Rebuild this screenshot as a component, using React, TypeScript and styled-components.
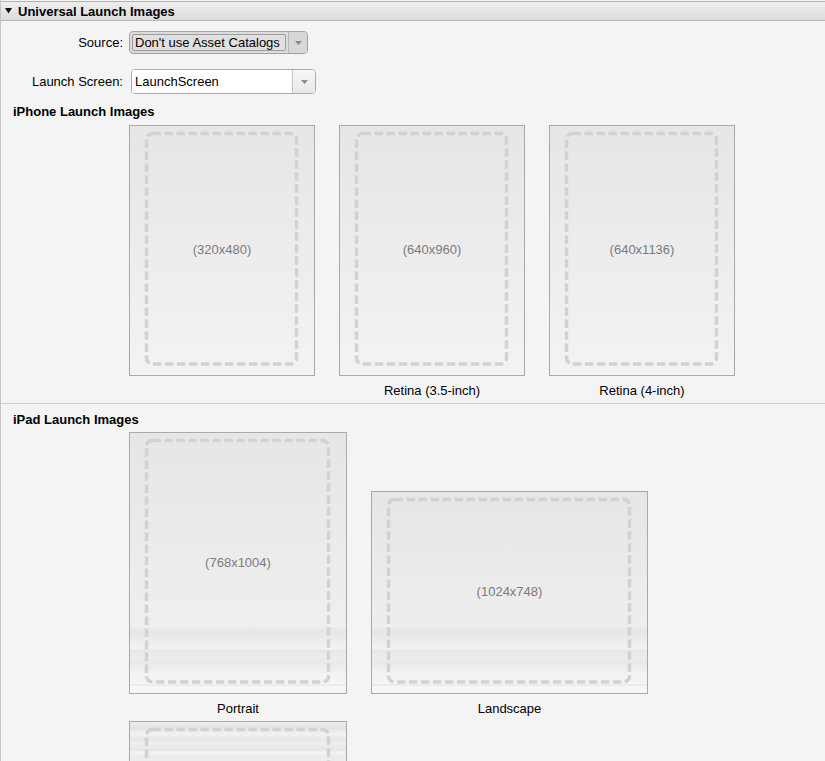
import React from 'react';
import styled, { createGlobalStyle } from 'styled-components';

const GlobalStyle = createGlobalStyle`
  html, body {
    margin: 0;
    padding: 0;
    background: #f4f4f4;
  }
  body {
    font-family: "Liberation Sans", Arial, Helvetica, sans-serif;
    color: #000;
  }
`;

const Page = styled.div`
  padding-top: 1px;
  min-height: 760px;
  border-left: 1px solid #c4c4c4;
  box-sizing: border-box;
`;

const SectionHeader = styled.div`
  display: flex;
  align-items: center;
  gap: 6px;
  height: 18px;
  padding-left: 4px;
  border-top: 1px solid #b2b2b2;
  border-bottom: 1px solid #b2b2b2;
  background: linear-gradient(to bottom, #eeeeee, #dcdcdc);
  font-size: 13px;
  font-weight: bold;
`;

const Form = styled.div`
  display: grid;
  grid-template-columns: 122px auto;
  column-gap: 6px;
  row-gap: 15px;
  align-items: center;
  justify-content: start;
  padding-top: 10px;
  font-size: 13px;
`;

const Label = styled.div`
  text-align: right;
`;

const Popup = styled.div<{ $disabled?: boolean; $width: number; $height: number }>`
  display: flex;
  width: ${p => p.$width}px;
  height: ${p => p.$height}px;
  box-sizing: border-box;
  border: 1px solid ${p => (p.$disabled ? '#a2a2a2' : '#ababab')};
  border-radius: 4px;
  overflow: hidden;
  background: ${p => (p.$disabled ? '#dcdcdc' : '#fff')};
  padding: ${p => (p.$disabled ? '2px' : '0')};
  margin-left: ${p => (p.$disabled ? '0' : '2px')};
`;

const PopupValue = styled.div<{ $disabled?: boolean }>`
  flex: 1;
  display: flex;
  align-items: center;
  padding-left: ${p => (p.$disabled ? '2px' : '3px')};
  background: ${p => (p.$disabled ? '#e0e0e0' : '#fff')};
  border: ${p => (p.$disabled ? '1px solid #9c9c9c' : 'none')};
  border-radius: ${p => (p.$disabled ? '2px' : '0')};
  white-space: nowrap;
`;

const PopupArrow = styled.div<{ $disabled?: boolean }>`
  width: ${p => (p.$disabled ? '18px' : '22px')};
  display: flex;
  align-items: center;
  justify-content: center;
  border-left: 1px solid ${p => (p.$disabled ? '#b8b8b8' : '#c4c4c4')};
  background: ${p => (p.$disabled ? '#d8d8d8' : 'linear-gradient(#f7f7f7, #e9e9e9)')};
  margin: ${p => (p.$disabled ? '-2px -2px -2px 2px' : '0')};
`;

const GroupTitle = styled.div<{ $top: number }>`
  font-size: 13px;
  font-weight: bold;
  line-height: 15px;
  padding: ${p => p.$top}px 0 0 12px;
`;

const Tiles = styled.div<{ $top: number; $align?: string }>`
  display: flex;
  align-items: ${p => p.$align || 'flex-start'};
  gap: 24px;
  padding: ${p => p.$top}px 0 0 128px;
`;

const TileColumn = styled.div`
  display: flex;
  flex-direction: column;
  align-items: center;
`;

const Box = styled.div<{ $w: number; $h: number; $bands: 'none' | 'bottom' | 'top' }>`
  display: grid;
  width: ${p => p.$w}px;
  height: ${p => p.$h}px;
  box-sizing: border-box;
  border: 1px solid #a9a9a9;
  background: ${p =>
    p.$bands === 'bottom'
      ? `linear-gradient(to bottom,
          transparent calc(100% - 66px),
          #ececec calc(100% - 66px), #e6e6e6 calc(100% - 61px),
          #f3f3f3 calc(100% - 44px), #e7e7e7 calc(100% - 43px),
          #ededed calc(100% - 36px), #e9e9e9 calc(100% - 30px),
          #f2f2f2 calc(100% - 20px),
          #f5f5f5 calc(100% - 9px), #e0e0e0 calc(100% - 8px),
          #f6f6f6 calc(100% - 7px)),
         linear-gradient(#e6e6e6, #f2f2f2)`
      : p.$bands === 'top'
      ? `linear-gradient(to bottom,
          #eeeeee 0, #e3e3e3 6px, #f2f2f2 12px, #e6e6e6 18px,
          #f0f0f0 21px, #e5e5e5 28px, #f3f3f3 30px, #eaeaea 36px, transparent 37px),
         linear-gradient(#ececec, #f2f2f2)`
      : 'linear-gradient(#e6e6e6, #f3f3f3)'};
`;

const Frame = styled.svg`
  grid-area: 1 / 1;
`;

const SizeText = styled.div`
  grid-area: 1 / 1;
  place-self: center;
  margin-top: -2px;
  font-size: 13px;
  color: #7b7b7b;
`;

const Caption = styled.div`
  font-size: 13px;
  line-height: 15px;
  height: 15px;
  margin-top: 7px;
`;

const Divider = styled.div<{ $top: number }>`
  margin-top: ${p => p.$top}px;
  border-top: 1px solid #cfcfcf;
`;

function Arrow() {
  return (
    <svg width="7" height="4" viewBox="0 0 7 4">
      <polygon points="0,0 7,0 3.5,4" fill="#8a8a8a" />
    </svg>
  );
}

type TileProps = {
  w: number;
  h: number;
  size?: string;
  caption?: string;
  bands?: 'none' | 'bottom' | 'top';
  showCaption?: boolean;
};

function Tile({ w, h, size, caption, bands = 'none', showCaption = true }: TileProps) {
  const iw = w - 2;
  const ih = h - 2;
  return (
    <TileColumn>
      <Box $w={w} $h={h} $bands={bands}>
        <Frame width={iw} height={ih}>
          <rect
            x={16.5}
            y={7.5}
            width={iw - 34}
            height={ih - 18.5}
            rx={6}
            fill="none"
            stroke="#d2d2d2"
            strokeWidth={3.5}
            strokeDasharray="8.5 3.5"
          />
        </Frame>
        {size && <SizeText>{size}</SizeText>}
      </Box>
      {showCaption && <Caption>{caption}</Caption>}
    </TileColumn>
  );
}

export default function App() {
  return (
    <Page>
      <GlobalStyle />
      <SectionHeader>
        <svg width="7" height="6" viewBox="0 0 7 6">
          <polygon points="0,0 7,0 3.5,5.5" fill="#111" />
        </svg>
        Universal Launch Images
      </SectionHeader>

      <Form>
        <Label>Source:</Label>
        <Popup $disabled $width={179} $height={23}>
          <PopupValue $disabled>Don't use Asset Catalogs</PopupValue>
          <PopupArrow $disabled>
            <Arrow />
          </PopupArrow>
        </Popup>
        <Label>Launch Screen:</Label>
        <Popup $width={185} $height={25}>
          <PopupValue>LaunchScreen</PopupValue>
          <PopupArrow>
            <Arrow />
          </PopupArrow>
        </Popup>
      </Form>

      <GroupTitle $top={10}>iPhone Launch Images</GroupTitle>
      <Tiles $top={6}>
        <Tile w={186} h={251} size="(320x480)" caption="" />
        <Tile w={186} h={251} size="(640x960)" caption="Retina (3.5-inch)" />
        <Tile w={186} h={251} size="(640x1136)" caption="Retina (4-inch)" />
      </Tiles>

      <Divider $top={5} />
      <GroupTitle $top={8}>iPad Launch Images</GroupTitle>
      <Tiles $top={5} $align="flex-end">
        <Tile w={218} h={262} size="(768x1004)" caption="Portrait" bands="bottom" />
        <Tile w={277} h={203} size="(1024x748)" caption="Landscape" bands="bottom" />
      </Tiles>
      <Tiles $top={5}>
        <Tile w={218} h={262} bands="top" showCaption={false} />
      </Tiles>
    </Page>
  );
}
